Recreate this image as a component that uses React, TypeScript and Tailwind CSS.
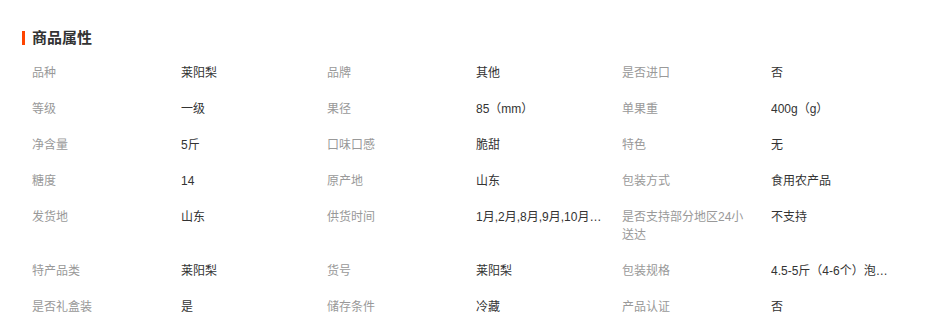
import React from "react";

const rows: [string, string][][] = [
  [["品种", "莱阳梨"], ["品牌", "其他"], ["是否进口", "否"]],
  [["等级", "一级"], ["果径", "85（mm）"], ["单果重", "400g（g）"]],
  [["净含量", "5斤"], ["口味口感", "脆甜"], ["特色", "无"]],
  [["糖度", "14"], ["原产地", "山东"], ["包装方式", "食用农产品"]],
  [["发货地", "山东"], ["供货时间", "1月,2月,8月,9月,10月,11月,12月"], ["是否支持部分地区24小送达", "不支持"]],
  [["特产品类", "莱阳梨"], ["货号", "莱阳梨"], ["包装规格", "4.5-5斤（4-6个）泡沫网套"]],
  [["是否礼盒装", "是"], ["储存条件", "冷藏"], ["产品认证", "否"]],
];

export default function App() {
  return (
    <div
      className="w-[943px] h-[324px] bg-white overflow-hidden"
      style={{ fontFamily: '"Liberation Sans", "Noto Sans CJK SC", sans-serif' }}
    >
      <div className="flex items-center pl-[22px] pt-[28px] h-[48px]">
        <div className="w-[3px] h-[14px] bg-[#ff4400]" />
        <div className="ml-[7px] text-[15px] leading-[20px] font-bold text-[#333333]">商品属性</div>
      </div>
      <div className="pl-[32px] mt-[7px]">
        {rows.map((row, i) => (
          <div key={i} className="grid grid-cols-[149px_146px_149px_146px_149px_146px] text-[12px] leading-[18px] py-[9px]">
            {row.map(([k, v], j) => (
              <React.Fragment key={j}>
                <div className="text-[#999999] pr-[20px] break-all">{k}</div>
                <div className="text-[#333333] pr-[20px] truncate">{v}</div>
              </React.Fragment>
            ))}
          </div>
        ))}
      </div>
    </div>
  );
}
